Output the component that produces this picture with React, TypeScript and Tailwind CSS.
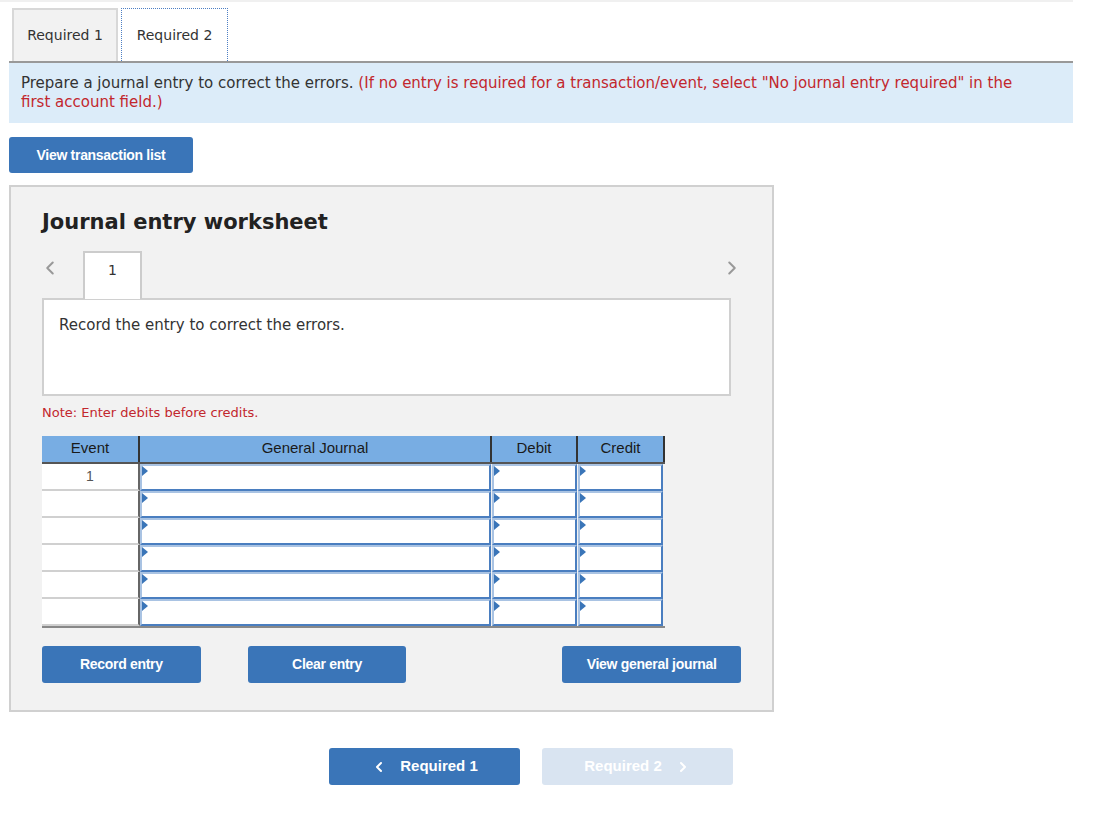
import { ChevronLeft, ChevronRight } from "lucide-react";

const verdana = { fontFamily: '"DejaVu Sans", Verdana, sans-serif' };
const arial = { fontFamily: '"Liberation Sans", Arial, sans-serif' };

const Row = ({ event }: { event?: string }) => (
  <div className="flex h-[27px]">
    <div className="w-[98px] bg-white border-b-2 border-[#d0d0d0] border-r-2 border-r-[#666] flex items-center justify-center text-[14px] text-[#555]">
      {event}
    </div>
    {[352, 86, 86].map((w, i) => (
      <div
        key={i}
        className="relative bg-white border-2 border-[#4a7ec0] border-t-[#a9c3e3] border-l-[#a9c3e3] mr-[1px]"
        style={{ width: w - 1 }}
      >
        <span className="absolute left-0 top-0 w-0 h-0 border-t-[5px] border-b-[5px] border-l-[6px] border-t-transparent border-b-transparent border-l-[#3a75b8]" />
      </div>
    ))}
  </div>
);

export default function App() {
  return (
    <div className="w-[1108px] h-[832px] bg-white relative text-[#222]" style={verdana}>
      <div className="w-[1073px] border-t-2 border-[#f0f0f0]">
        {/* Tabs */}
        <div className="flex items-end h-[61px] ml-[9px] pl-[3px] gap-[3px] border-b-2 border-[#999]">
          <div className="h-[53px] w-[106px] bg-[#f2f2f2] border-2 border-b-0 border-[#d8d8d8] flex items-center justify-center text-[14px] text-[#333]">
            Required 1
          </div>
          <div className="h-[53px] w-[107px] bg-white border border-b-0 border-dotted border-[#4d7fc4] flex items-center justify-center text-[14px] text-[#333]">
            Required 2
          </div>
        </div>
      </div>
      <div className="ml-[9px] w-[1064px]">
        <div className="bg-[#dcecf9] h-[60px] pl-[12px] pr-[40px] pt-[11px] text-[15px] leading-[19px] text-[#333]">
          Prepare a journal entry to correct the errors.{" "}
          <span className="text-[#c2272d]">
            (If no entry is required for a transaction/event, select "No journal entry required" in the first account
            field.)
          </span>
        </div>

        <button
          className="mt-[14px] w-[184px] h-[36px] rounded-[3px] bg-[#3a75b8] text-white text-[14px] font-bold tracking-[-0.3px]"
          style={arial}
        >
          View transaction list
        </button>

        {/* Worksheet */}
        <div className="mt-[12px] w-[765px] h-[527px] bg-[#f2f2f2] border-2 border-[#d0d0d0] px-[31px]">
          <h2 className="mt-[20px] text-[21px] font-bold leading-[30px] text-[#222]">Journal entry worksheet</h2>

          <div className="mt-[14px] flex items-end h-[48px] relative">
            <ChevronLeft className="absolute left-[-3px] top-[6px] w-[22px] h-[22px] text-[#999]" strokeWidth={2.2} />
            <div className="ml-[41px] w-[59px] h-[48px] bg-white border-2 border-b-0 border-[#ccc] flex justify-center pt-[7px] text-[14px] text-[#333]">
              1
            </div>
            <ChevronRight className="absolute right-[-2px] top-[6px] w-[22px] h-[22px] text-[#999]" strokeWidth={2.2} />
          </div>
          <div className="w-[689px] h-[98px] bg-white border-2 border-[#d0d0d0] -mt-[1px] px-[15px] pt-[14px] text-[15px] text-[#333]">
            Record the entry to correct the errors.
          </div>

          <div className="mt-[7px] text-[13px] text-[#c2272d]">Note: Enter debits before credits.</div>

          {/* Table */}
          <div className="mt-[13px] w-[623px] border-b-2 border-[#888]" style={arial}>
            <div className="flex h-[28px] bg-[#78ade3] border-b-2 border-[#555] text-[15px] text-[#1a1a1a]">
              <div className="w-[98px] border-r-2 border-[#333] flex items-center justify-center">Event</div>
              <div className="w-[352px] border-r-2 border-[#333] flex items-center justify-center">General Journal</div>
              <div className="w-[86px] border-r-2 border-[#333] flex items-center justify-center">Debit</div>
              <div className="w-[87px] border-r-2 border-[#333] flex items-center justify-center">Credit</div>
            </div>
            <Row event="1" />
            <Row />
            <Row />
            <Row />
            <Row />
            <Row />
          </div>

          <div className="mt-[18px] flex text-white text-[14px] font-bold tracking-[-0.3px]" style={arial}>
            <button className="w-[159px] h-[37px] rounded-[3px] bg-[#3a75b8]">Record entry</button>
            <button className="ml-[47px] w-[159px] h-[37px] rounded-[3px] bg-[#3a75b8]">Clear entry</button>
            <button className="ml-[156px] w-[179px] h-[37px] rounded-[3px] bg-[#3a75b8]">View general journal</button>
          </div>
        </div>

        {/* Bottom nav */}
        <div className="mt-[36px] ml-[320px] flex gap-[22px] text-white text-[15px] font-bold" style={arial}>
          <button className="w-[191px] h-[37px] rounded-[3px] bg-[#3a75b8] flex items-center justify-center gap-[13px]">
            <ChevronLeft className="w-[16px] h-[16px]" strokeWidth={3} />
            Required 1
          </button>
          <button className="w-[191px] h-[37px] rounded-[3px] bg-[#d9e4f1] flex items-center justify-center gap-[13px]">
            Required 2
            <ChevronRight className="w-[16px] h-[16px]" strokeWidth={3} />
          </button>
        </div>
      </div>
    </div>
  );
}
